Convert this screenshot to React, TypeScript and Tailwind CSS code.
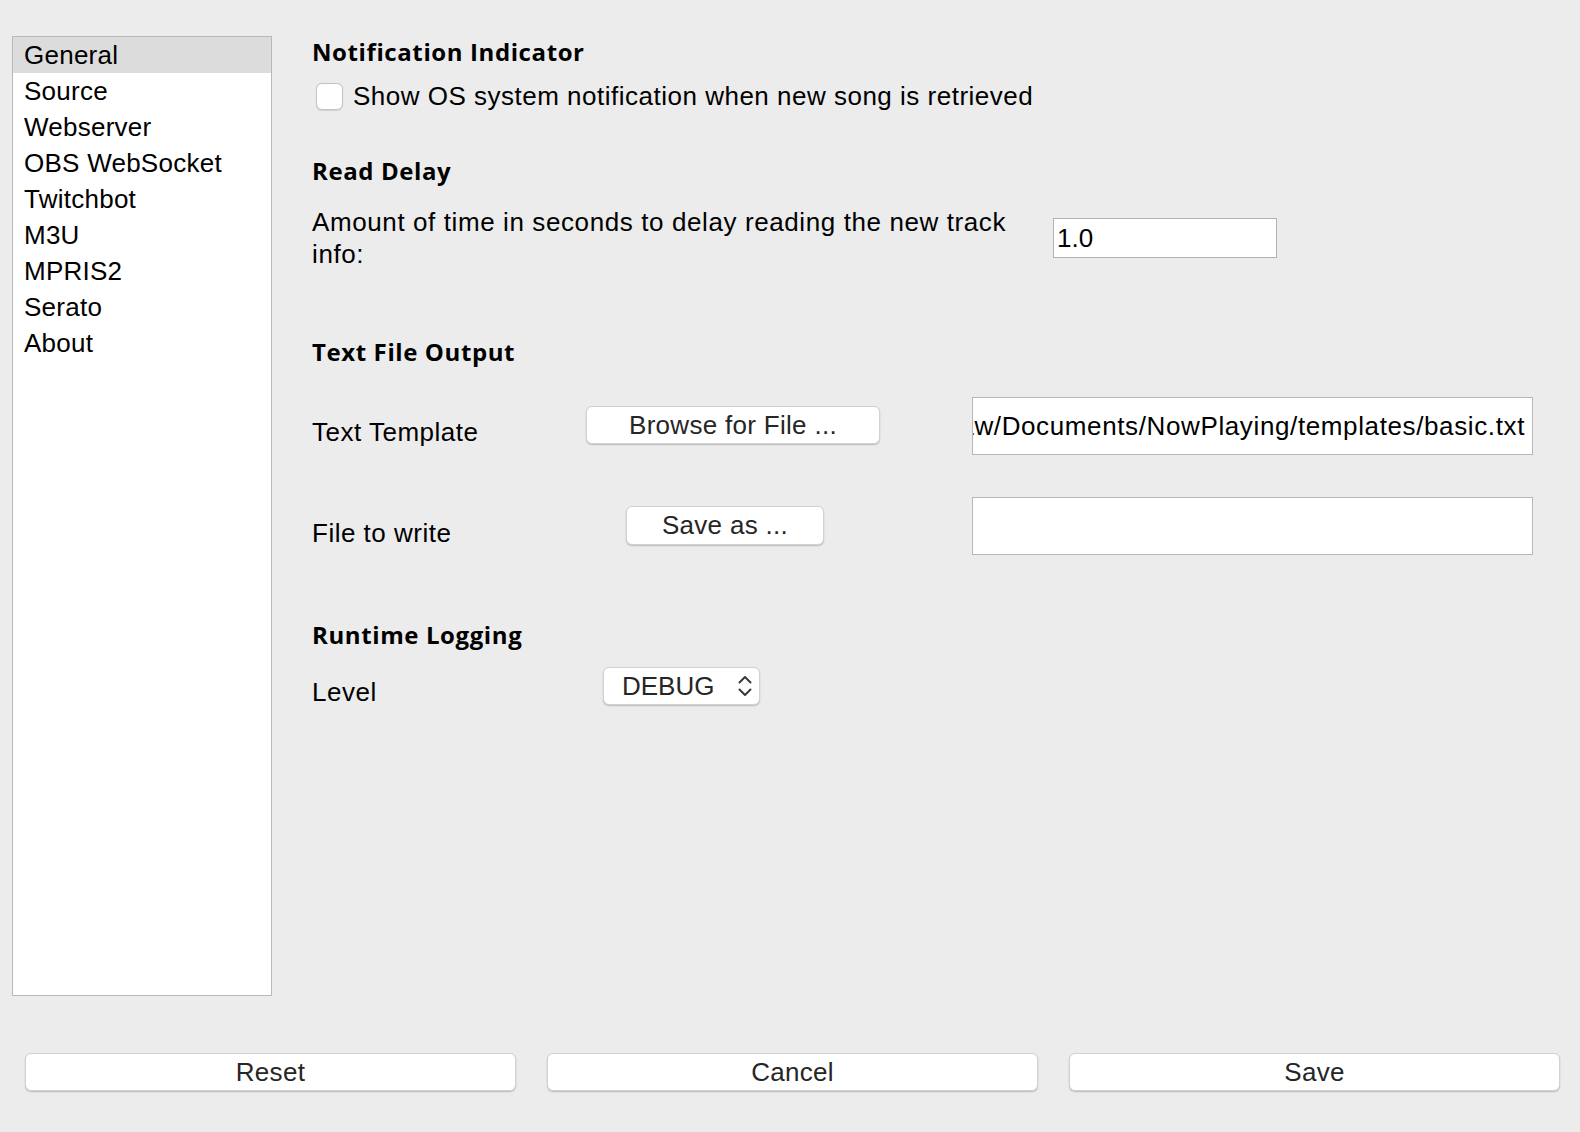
import React from 'react';

const sans = "font-['Liberation_Sans',Arial,sans-serif]";
const head = "font-['Open_Sans',sans-serif] font-bold text-[24px] tracking-[0.6px] leading-[32px] text-black";
const body = 'text-[26px] tracking-[0.5px] text-black';

const pages = ['General', 'Source', 'Webserver', 'OBS WebSocket', 'Twitchbot', 'M3U', 'MPRIS2', 'Serato', 'About'];

const MacButton: React.FC<{ label: string; className?: string }> = ({ label, className = '' }) => (
  <button
    className={`flex items-center justify-center bg-white rounded-[6px] border border-[#d2d2d2] shadow-[0_1px_1.5px_rgba(0,0,0,0.22)] text-[#262626] text-[26px] tracking-[0.3px] leading-none ${className}`}
  >
    {label}
  </button>
);

const Chevrons: React.FC = () => (
  <svg width="16" height="24" viewBox="0 0 16 24" fill="none" stroke="#3a3a3a" strokeWidth="2" strokeLinecap="round" strokeLinejoin="round">
    <path d="M2.5 8.5 L8 3 L13.5 8.5" />
    <path d="M2.5 15.5 L8 21 L13.5 15.5" />
  </svg>
);

export default function App() {
  return (
    <div className={`w-[1580px] h-[1132px] bg-[#ececec] flex flex-col overflow-hidden ${sans}`}>
      <div className="flex pt-[36px] pl-[12px]">
        {/* page list */}
        <div className="w-[260px] h-[960px] bg-white border border-[#b8b8b8] flex flex-col">
          {pages.map((p, i) => (
            <div
              key={p}
              className={`h-[36px] flex items-center pl-[11px] text-[26px] tracking-[0.25px] text-black ${i === 0 ? 'bg-[#dcdcdc]' : ''}`}
            >
              {p}
            </div>
          ))}
        </div>

        {/* settings */}
        <div className="ml-[40px] flex flex-col">
          <div className={head}>Notification Indicator</div>

          <div className="mt-[12px] h-[32px] flex items-center">
            <div className="w-[27px] h-[27px] ml-[4px] rounded-[6px] bg-white border border-[#c4c4c4] shadow-[0_0.5px_1px_rgba(0,0,0,0.12)]" />
            <span className={`ml-[10px] ${body}`}>Show OS system notification when new song is retrieved</span>
          </div>

          <div className={`mt-[43px] ${head}`}>Read Delay</div>

          <div className="mt-[19px] flex items-center">
            <div className={`w-[712px] leading-[32px] ${body} tracking-[0.6px]`}>
              Amount of time in seconds to delay reading the new track info:
            </div>
            <div className="ml-[29px] w-[224px] h-[40px] bg-white border border-[#b3b3b3] flex items-center pl-[3px] text-[26px] text-black">
              1.0
            </div>
          </div>

          <div className={`mt-[66px] ${head}`}>Text File Output</div>

          <div className="mt-[29px] h-[58px] flex items-center">
            <div className={`w-[274px] pt-[12px] ${body}`}>Text Template</div>
            <MacButton label="Browse for File ..." className="w-[294px] h-[38px] mb-[2px]" />
            <div className="ml-[92px] w-[561px] h-[58px] bg-white border border-[#b8b8b8] flex items-center justify-end overflow-hidden pr-[7px] whitespace-nowrap text-[26px] tracking-[0.62px] text-black">
              <span className="shrink-0">/Users/aw/Documents/NowPlaying/templates/basic.txt</span>
            </div>
          </div>

          <div className="mt-[42px] h-[58px] flex items-center">
            <div className={`w-[314px] pt-[14px] ${body}`}>File to write</div>
            <MacButton label="Save as ..." className="w-[198px] h-[39px] mb-[2px]" />
            <div className="ml-[148px] w-[561px] h-[58px] bg-white border border-[#b8b8b8]" />
          </div>

          <div className={`mt-[64px] ${head}`}>Runtime Logging</div>

          <div className="mt-[16px] h-[38px] flex items-center">
            <div className={`w-[291px] pt-[12px] ${body}`}>Level</div>
            <div className="w-[157px] h-[38px] bg-white rounded-[6px] border border-[#d2d2d2] shadow-[0_1px_1.5px_rgba(0,0,0,0.22)] flex items-center justify-between pl-[18px] pr-[6px] text-[26px] text-[#262626]">
              <span>DEBUG</span>
              <Chevrons />
            </div>
          </div>
        </div>
      </div>

      {/* dialog buttons */}
      <div className="mt-[57px] pl-[25px] flex gap-[31px]">
        <MacButton label="Reset" className="w-[491px] h-[38px]" />
        <MacButton label="Cancel" className="w-[491px] h-[38px]" />
        <MacButton label="Save" className="w-[491px] h-[38px]" />
      </div>
    </div>
  );
}
